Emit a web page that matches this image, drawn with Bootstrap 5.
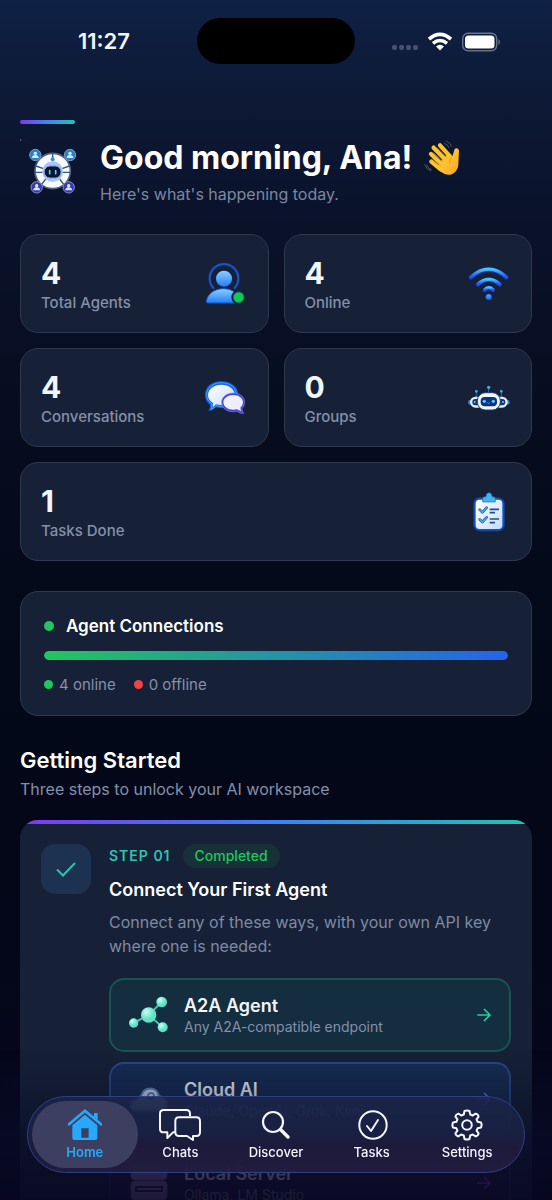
<!DOCTYPE html>
<html lang="en" data-bs-theme="dark">
<head>
<meta charset="utf-8">
<meta name="viewport" content="width=device-width, initial-scale=1">
<title>Home</title>
<link href="https://cdn.jsdelivr.net/npm/bootstrap@5.3.0/dist/css/bootstrap.min.css" rel="stylesheet">
<style>
  :root { --panel: #162137; --edge: #2f394c; --muted: #8490a8; --bright: #f1f5fc; }
  body { font-family: Inter, "Liberation Sans", sans-serif; color: var(--bright); background: #040919; }
  svg { display: block; flex: none; }
  .app-shell { height: 100vh; overflow: hidden; background: linear-gradient(#0f2145 0, #0d1834 110px, #0a122a 230px, #070d20 400px, #040a1a 580px, #030718 850px, #07061e 1200px); }
  .status-bar { height: 83px; padding: 0 51px 0 78px; flex: none; }
  .status-time { font-size: 22px; font-weight: 600; }
  .island { width: 158px; height: 46px; border-radius: 23px; background: #000; top: 18px; }
  .page-body { padding: 37px 20px 0; }
  .accent-line { width: 55px; height: 4px; border-radius: 2px; background: linear-gradient(90deg, #7c3aed, #4484ee, #21c4b0); margin-bottom: 14px; }
  .hello { font-size: 32px; line-height: 40px; font-weight: 700; gap: 12px; }
  .hello-sub { font-size: 16px; line-height: 20px; color: #7b879f; margin-top: 6px; }
  .section-gap { margin-top: 30px; }
  .stat-grid { display: grid; grid-template-columns: 1fr 1fr; gap: 15px; }
  .panel { background: var(--panel); border: 1px solid var(--edge); border-radius: 18px; }
  .stat { padding: 20px; height: 99px; }
  .stat-num { font-size: 30px; line-height: 35px; font-weight: 700; padding-top: 2px; }
  .stat-label { font-size: 15px; line-height: 20px; margin-top: 2px; font-weight: 500; color: var(--muted); }
  .wide { grid-column: span 2; }
  .connections { padding: 22px 23px 20px; }
  .connections h2 { font-size: 17px; line-height: 24px; font-weight: 600; }
  .dot { width: 9px; height: 9px; border-radius: 50%; background: #22c55e; flex: none; }
  .dot-lg { width: 10px; height: 10px; }
  .dot-red { background: #ef4444; }
  .meter { height: 9px; border-radius: 5px; margin: 13px 0 14px; background: #1e293b; }
  .meter .progress-bar { border-radius: 5px; background: linear-gradient(90deg, #22c55e, #2563eb); }
  .legend-row { font-size: 15px; line-height: 21px; color: var(--muted); gap: 18px; }
  .legend-row > span { gap: 6px; }
  .started { font-size: 22px; line-height: 28px; font-weight: 600; }
  .started-sub { font-size: 16px; line-height: 20px; color: var(--muted); margin: 5px 0 21px; }
  .step-card { background: var(--panel); border-radius: 18px 18px 0 0; overflow: hidden; }
  .step-stripe { height: 4px; background: linear-gradient(90deg, #7c3aed, #3b82f6 50%, #21c4b0); }
  .step-inner { padding: 20px 21px; gap: 18px; }
  .check-tile { width: 50px; height: 50px; border-radius: 14px; background: #1d3150; flex: none; }
  .step-no { font-size: 14px; line-height: 24px; font-weight: 600; letter-spacing: 1px; color: #2dc4b2; }
  .step-head { gap: 12px; }
  .done { font-size: 14px; line-height: 24px; font-weight: 500; padding: 0 12px; border-radius: 12px; color: #22c55e; background: #163138; }
  .step-title { font-size: 18px; line-height: 24px; margin-top: 10px; font-weight: 600; color: #fff; }
  .step-text { font-size: 16px; line-height: 24px; color: #7f8aa2; margin: 8px 0 20px; }
  .option { height: 74px; border: 2px solid #175452; background: #142e40; border-radius: 15px; padding: 0 17px; gap: 14px; margin-bottom: 10px; text-decoration: none; }
  .option-blue { border-color: #284a8e; background: #172e54; }
  .option-violet { border-color: #3b2860; background: #201f45; }
  .option-name { font-size: 18px; line-height: 22px; font-weight: 600; color: var(--bright); }
  .option-note { font-size: 14px; line-height: 19px; color: var(--muted); }
  .fade-out { height: 150px; pointer-events: none; background: linear-gradient(rgba(6,12,32,0), rgba(8,12,38,.36) 32%, rgba(9,11,38,.72) 62%, rgba(8,6,32,.86)); }
  .tab-wrap { padding: 0 27px 27px; z-index: 1031; }
  .tab-bar { height: 77px; padding: 4px 9px; border: 1px solid #2f3f82; border-radius: 39px; background: linear-gradient(rgba(27,37,74,.88), rgba(25,34,68,.92) 45%, rgba(31,27,60,.95) 65%, rgba(33,30,64,.96)); }
  .tab { font-size: 13px; line-height: 18px; font-weight: 500; color: #f2f4ff; text-decoration: none; border-radius: 34px; gap: 2px; margin: 0 -5px; flex: 1 1 0; }
  .tab-on { color: #28a8fb; background: #3c3f5f; font-weight: 600; }
</style>
</head>
<body>
<div class="app-shell d-flex flex-column">
  <header class="status-bar d-flex align-items-center justify-content-between position-relative">
    <span class="status-time">11:27</span>
    <div class="island position-absolute start-50 translate-middle-x"></div>
    <svg width="110" height="24" viewBox="0 0 110 24" aria-hidden="true">
      <g fill="#46526d"><rect x="1" y="15" width="5" height="5" rx="2"/><rect x="8" y="15" width="5" height="5" rx="2"/><rect x="15" y="15" width="5" height="5" rx="2"/><rect x="22" y="15" width="5" height="5" rx="2"/></g>
      <g fill="none" stroke="#fff" stroke-width="3.6"><path d="M38 9.200Q49 -.4 60 9.200"/><path d="M42 13.400Q49 7.600 56 13.400"/></g>
      <path d="M45 16.500Q49 13 53 16.500L49 20.500Z" fill="#fff"/>
      <rect x="71.700" y="3.200" width="34" height="17.600" rx="5.500" fill="none" stroke="#68738b" stroke-width="1.400"/>
      <rect x="74" y="5.500" width="29.500" height="13" rx="3.500" fill="#fff"/>
      <path d="M107.500 9q3 3 0 6Z" fill="#68738b"/>
    </svg>
  </header>

  <main class="page-body">
    <div class="accent-line"></div>
    <div class="d-flex align-items-center gap-3">
      <svg width="64" height="64" viewBox="60 114 192 192" aria-hidden="true">
        <defs>
          <linearGradient id="azure" x2="0" y2="1"><stop stop-color="#8ed0ff"/><stop offset="1" stop-color="#1f7df8"/></linearGradient>
          <linearGradient id="sky" x2="0" y2="1"><stop stop-color="#45c4ff"/><stop offset="1" stop-color="#2455f5"/></linearGradient>
          <linearGradient id="frost" x2="1" y2="1"><stop stop-color="#ffffff"/><stop offset="1" stop-color="#c3ddfb"/></linearGradient>
          <radialGradient id="mint" cx=".35" cy=".3"><stop stop-color="#c9fff0"/><stop offset="1" stop-color="#5fe0c8"/></radialGradient>
        </defs>
        <g fill="#7c879b"><circle cx="62" cy="117" r="2"/><circle cx="78" cy="117" r="1"/></g>
        <path d="M106 162L210 259M210 162L110 259" stroke="#59709a" stroke-width="8"/>
        <circle cx="158" cy="210" r="53" fill="#f6f9ff" stroke="#525f7a" stroke-width="5"/>
        <path d="M158 158v22M108 195l22 8M208 195l-22 8M125 250l12-16M191 250l-12-16M106 214h22M188 214h22" stroke="#33538d" stroke-width="4"/>
        <circle cx="158" cy="212" r="31" fill="#a9c4f5"/>
        <circle cx="158" cy="175" r="6" fill="#2c8cf0"/>
        <rect x="133" y="195" width="50" height="36" rx="17" fill="#07152f" stroke="#7c9fdb" stroke-width="3"/>
        <path d="M149 209v9M167 209v9" stroke="#54cfff" stroke-width="5" stroke-linecap="round"/>
        <g stroke="#8298be" stroke-width="3"><circle cx="106" cy="162" r="17" fill="#267fc4"/><circle cx="210" cy="162" r="17" fill="#267fc4"/><circle cx="110" cy="259" r="17" fill="#3c35b5"/><circle cx="206" cy="259" r="17" fill="#3c35b5"/></g>
        <g fill="#d4edff"><circle cx="106" cy="157" r="5"/><path d="M96 171q0-9 10-9t10 9Z"/><circle cx="210" cy="157" r="5"/><path d="M200 171q0-9 10-9t10 9Z"/><circle cx="110" cy="254" r="5"/><path d="M100 268q0-9 10-9t10 9Z"/><circle cx="206" cy="254" r="5"/><path d="M196 268q0-9 10-9t10 9Z"/></g>
      </svg>
      <div>
        <h1 class="hello mb-0 d-flex align-items-center">Good morning, Ana!
          <svg width="36" height="36" viewBox="0 0 108 108" role="img" aria-label="Waving hand">
            <defs><linearGradient id="hand" x2="1" y2="1"><stop stop-color="#ffd84a"/><stop offset="1" stop-color="#f7a51d"/></linearGradient></defs>
            <path d="M44 70L73 40 84 50Q88 42 91 30C93 22 106 24 105 34C104 46 104 58 103 74C101 96 82 110 62 102C55 99 49 93 42 87Z" fill="url(#hand)"/>
            <g stroke="#fdc32f" stroke-width="13" stroke-linecap="round"><path d="M48 16L78 49"/><path d="M29 23L65 60"/><path d="M21 42L56 76"/><path d="M22 65L50 88"/></g>
            <g stroke="#df8f12" stroke-width="2" stroke-linecap="round" fill="none"><path d="M40 24L68 52M29 39L58 65M26 58L50 76"/><path d="M83 51Q75 58 77 70"/></g>
            <g stroke="#5a6070" stroke-width="2.500" stroke-linecap="round" fill="none"><path d="M62 10q10 4 13 13M67 3q12 5 16 16M9 76q3 10 13 13M2 73q4 15 18 20"/></g>
          </svg>
        </h1>
        <p class="hello-sub mb-0">Here's what's happening today.</p>
      </div>
    </div>

    <section class="stat-grid section-gap" aria-label="Overview">
      <div class="panel stat d-flex align-items-center justify-content-between">
        <div><div class="stat-num">4</div><div class="stat-label">Total Agents</div></div>
        <svg width="45" height="45" viewBox="607 105 135 135" aria-hidden="true">
          <path d="M638 186A43 43 0 1 1 702 186" fill="none" stroke="#1b51c6" stroke-width="7" stroke-linecap="round"/>
          <circle cx="670" cy="158" r="28" fill="#10234e"/><circle cx="670" cy="158" r="24" fill="url(#azure)"/>
          <path d="M617 226C620 203 642 188 668 188C690 188 706 198 713 212V231H622Q617 231 617 226Z" fill="url(#azure)" stroke="#1555d8" stroke-width="3"/>
          <circle cx="714" cy="214" r="22" fill="#162137"/><circle cx="714" cy="214" r="16" fill="#12c65b" stroke="#087d4a" stroke-width="3"/>
        </svg>
      </div>
      <div class="panel stat d-flex align-items-center justify-content-between">
        <div><div class="stat-num">4</div><div class="stat-label">Online</div></div>
        <svg width="45" height="45" viewBox="579 105 135 135" aria-hidden="true">
          <g fill="none" stroke-linecap="round"><g stroke="#173ec0" stroke-width="13"><path d="M594 154Q647 107 700 154"/><path d="M615 175Q647 147 680 175"/><path d="M635 192Q647 180 660 192"/></g>
          <g stroke="url(#sky)" stroke-width="9"><path d="M594 153Q647 106 700 153"/><path d="M615 174Q647 146 680 174"/><path d="M635 191Q647 179 660 191"/></g></g>
          <circle cx="647" cy="213" r="9" fill="url(#sky)" stroke="#173ec0" stroke-width="2"/>
        </svg>
      </div>
      <div class="panel stat d-flex align-items-center justify-content-between">
        <div><div class="stat-num">4</div><div class="stat-label">Conversations</div></div>
        <svg width="45" height="45" viewBox="607 448 135 135" aria-hidden="true">
          <path d="M662 467C692 467 713 484 713 508S692 547 662 547Q653 547 646 545Q638 554 623 556Q630 548 628 537C618 530 613 519 613 508C613 484 633 467 662 467Z" fill="#1a63e8"/>
          <path d="M662 471C688 471 707 487 707 508S688 542 662 542Q653 542 646 540Q640 548 631 551Q635 544 633 534C623 528 618 518 618 508C618 487 637 471 662 471Z" fill="none" stroke="#4cc3ff" stroke-width="2"/>
          <path d="M662 477C685 477 702 490 702 508S685 538 662 538Q653 538 646 536L636 545L637 532C627 526 622 517 622 508C622 490 640 477 662 477Z" fill="url(#frost)"/>
          <path d="M698 502C718 502 732 514 732 530Q732 542 724 549Q724 557 729 563Q717 564 709 557C683 562 663 550 663 530C663 514 678 502 698 502Z" fill="#4545dc" stroke="#8b78ff" stroke-width="2"/>
          <path d="M698 508C715 508 727 518 727 530Q727 540 719 546L721 557L709 551C688 556 668 546 668 530C668 518 681 508 698 508Z" fill="#eeeeff"/>
        </svg>
      </div>
      <div class="panel stat d-flex align-items-center justify-content-between">
        <div><div class="stat-num">0</div><div class="stat-label">Groups</div></div>
        <svg width="45" height="45" viewBox="579 448 135 135" aria-hidden="true">
          <path d="M647 486v18M610 498v16M685 498v16" stroke="#2c6ab4" stroke-width="3"/>
          <circle cx="647" cy="485" r="5" fill="#37b4ef"/><circle cx="610" cy="497" r="4" fill="#37b4ef"/><circle cx="685" cy="497" r="4" fill="#37b4ef"/>
          <ellipse cx="590" cy="530" rx="5" ry="7" fill="#3e7ac4"/><ellipse cx="705" cy="530" rx="5" ry="7" fill="#3e7ac4"/>
          <rect x="591" y="513" width="40" height="33" rx="16" fill="#e3eeff"/><rect x="664" y="513" width="40" height="33" rx="16" fill="#e3eeff"/>
          <rect x="598" y="520" width="30" height="19" rx="9" fill="#143572"/><rect x="667" y="520" width="30" height="19" rx="9" fill="#143572"/>
          <circle cx="605" cy="529" r="3" fill="#4cd0ff"/><circle cx="690" cy="529" r="3" fill="#4cd0ff"/>
          <rect x="613" y="501" width="69" height="52" rx="24" fill="#f0f5ff" stroke="#1c3e7e" stroke-width="3"/>
          <rect x="623" y="514" width="49" height="28" rx="12" fill="#0d3280"/>
          <circle cx="634" cy="527" r="5" fill="#54c9ff"/><circle cx="661" cy="527" r="5" fill="#54c9ff"/><path d="M643 531q4 4 8 0" fill="none" stroke="#54c9ff" stroke-width="2"/>
        </svg>
      </div>
      <div class="panel stat wide d-flex align-items-center justify-content-between">
        <div><div class="stat-num">1</div><div class="stat-label">Tasks Done</div></div>
        <svg width="45" height="45" viewBox="195 100 135 135" aria-hidden="true">
          <rect x="218" y="126" width="92" height="100" rx="18" fill="#1556be" stroke="#0d3d94" stroke-width="3"/>
          <rect x="224" y="132" width="80" height="88" rx="12" fill="url(#frost)"/>
          <path d="M245 139V130Q245 123 252 123H255Q255 111 264 111T273 123H276Q283 123 283 130V139Z" fill="#45b2ee" stroke="#176bc4" stroke-width="2"/>
          <g fill="none" stroke-linecap="round" stroke-linejoin="round"><path d="M236 162l8 8 13-14M236 191l8 8 13-14" stroke="#1b61ab" stroke-width="8"/><path d="M236 162l8 8 13-14M236 191l8 8 13-14" stroke="#54a9e0" stroke-width="4"/></g>
          <path d="M266 161h28M266 171h16M266 190h28M266 201h16" stroke="#234d8f" stroke-width="5"/>
        </svg>
      </div>
    </section>

    <section class="panel connections section-gap">
      <div class="d-flex align-items-center gap-2">
        <span class="dot dot-lg"></span><h2 class="mb-0 ms-1">Agent Connections</h2>
      </div>
      <div class="progress meter" role="progressbar" aria-label="Agents online" aria-valuenow="100" aria-valuemin="0" aria-valuemax="100"><div class="progress-bar w-100 h-100"></div></div>
      <div class="legend-row d-flex">
        <span class="d-flex align-items-center"><span class="dot"></span>4 online</span>
        <span class="d-flex align-items-center"><span class="dot dot-red"></span>0 offline</span>
      </div>
    </section>

    <section class="section-gap">
      <h2 class="started mb-0">Getting Started</h2>
      <p class="started-sub">Three steps to unlock your AI workspace</p>
      <div class="step-card">
        <div class="step-stripe"></div>
        <div class="step-inner d-flex align-items-start">
          <div class="check-tile d-flex align-items-center justify-content-center">
            <svg width="24" height="24" viewBox="0 0 24 24" fill="none" stroke="#2dc4b2" stroke-width="2" aria-hidden="true"><path d="M3 12.500L9 18.500 21 6"/></svg>
          </div>
          <div class="flex-grow-1">
            <div class="step-head d-flex align-items-center"><span class="step-no">STEP 01</span><span class="done">Completed</span></div>
            <h3 class="step-title mb-0">Connect Your First Agent</h3>
            <p class="step-text">Connect any of these ways, with your own API key where one is needed:</p>
            <a href="#a2a" class="option d-flex align-items-center">
              <svg width="42" height="42" viewBox="0 0 126 126" aria-hidden="true">
                <path d="M17 87L62 63 101 24M62 63L104 100" stroke="#45bfae" stroke-width="6" fill="none"/>
                <g fill="url(#mint)"><circle cx="62" cy="63" r="23"/><circle cx="101" cy="24" r="16"/><circle cx="17" cy="87" r="14"/><circle cx="104" cy="100" r="15"/></g>
              </svg>
              <span class="flex-grow-1"><span class="option-name d-block">A2A Agent</span><span class="option-note d-block">Any A2A-compatible endpoint</span></span>
              <svg width="16" height="16" viewBox="0 0 16 16" fill="none" stroke="#20cfa0" stroke-width="1.700" stroke-linecap="round" stroke-linejoin="round" aria-hidden="true"><path d="M2 8h12M8.500 2.500L14 8 8.500 13.500"/></svg>
            </a>
            <a href="#cloud" class="option option-blue d-flex align-items-center">
              <svg width="42" height="42" viewBox="0 0 42 42" aria-hidden="true"><path d="M8 33C1 32 1 23 8 22C10 19 11 19 13 18C16 8 29 8 31 18C41 19 41 33 33 33Z" fill="#c9d9f0" stroke="#5d89bd" stroke-width="2"/><circle cx="23" cy="18" r="3" fill="none" stroke="#4a74b0" stroke-width="1.500"/></svg>
              <span class="flex-grow-1"><span class="option-name d-block">Cloud AI</span><span class="option-note d-block">Claude, OpenAI, Grok, Kimi</span></span>
              <svg width="16" height="16" viewBox="0 0 16 16" fill="none" stroke="#4a80f4" stroke-width="1.700" stroke-linecap="round" stroke-linejoin="round" aria-hidden="true"><path d="M2 8h12M8.500 2.500L14 8 8.500 13.500"/></svg>
            </a>
            <a href="#local" class="option option-violet d-flex align-items-center">
              <svg width="42" height="42" viewBox="0 0 42 42" aria-hidden="true"><g fill="#a184c8" stroke="#7b62a8"><rect x="3" y="2" width="36" height="16" rx="4"/><rect x="3" y="19" width="36" height="19" rx="4"/></g><rect x="8" y="25" width="26" height="4" fill="none" stroke="#30264e" stroke-width="2"/></svg>
              <span class="flex-grow-1"><span class="option-name d-block">Local Server</span><span class="option-note d-block">Ollama, LM Studio</span></span>
              <svg width="16" height="16" viewBox="0 0 16 16" fill="none" stroke="#9a43e0" stroke-width="1.700" stroke-linecap="round" stroke-linejoin="round" aria-hidden="true"><path d="M2 8h12M8.500 2.500L14 8 8.500 13.500"/></svg>
            </a>
          </div>
        </div>
      </div>
    </section>
  </main>
</div>

<div class="fade-out fixed-bottom"></div>
<div class="tab-wrap fixed-bottom">
  <nav class="tab-bar d-flex" aria-label="Main">
    <a href="#home" class="tab tab-on d-flex flex-column align-items-center justify-content-center" aria-current="page">
      <svg width="34" height="32" viewBox="0 0 102 96" aria-hidden="true"><path d="M3 46L51 5 99 46" fill="none" stroke="#28a8fb" stroke-width="8" stroke-linecap="round" stroke-linejoin="round"/><path d="M78 12h11v22l-11-9Z" fill="#28a8fb"/><path fill-rule="evenodd" d="M13 49L51 17 88 49V87Q88 93 82 93H19Q13 93 13 87ZM40 58V86H62V58Z" fill="#28a8fb"/></svg>
      Home
    </a>
    <a href="#chats" class="tab d-flex flex-column align-items-center justify-content-center">
      <svg width="42" height="32" viewBox="0 0 126 96" fill="none" stroke="#f4f7ff" stroke-width="6" stroke-linejoin="round" aria-hidden="true"><path d="M93 22V14Q93 3 82 3H14Q3 3 3 14V59Q3 70 14 70H25V87L42 70H49"/><path d="M60 25H112Q123 25 123 36V70Q123 81 112 81H102V93L84 81H60Q49 81 49 70V36Q49 25 60 25Z"/></svg>
      Chats
    </a>
    <a href="#discover" class="tab d-flex flex-column align-items-center justify-content-center">
      <svg width="32" height="32" viewBox="0 0 32 32" fill="none" stroke="#f4f7ff" aria-hidden="true"><circle cx="13" cy="13" r="10" stroke-width="2.200"/><path d="M20.500 20.500L28 28" stroke-width="3.400" stroke-linecap="round"/></svg>
      Discover
    </a>
    <a href="#tasks" class="tab d-flex flex-column align-items-center justify-content-center">
      <svg width="32" height="32" viewBox="0 0 32 32" fill="none" stroke="#f4f7ff" stroke-width="2" aria-hidden="true"><circle cx="17" cy="16" r="13.700"/><path d="M11 17l4 5 7-11" stroke-linecap="round" stroke-linejoin="round"/></svg>
      Tasks
    </a>
    <a href="#settings" class="tab d-flex flex-column align-items-center justify-content-center">
      <svg width="32" height="32" viewBox="0 0 32 32" fill="none" stroke="#f4f7ff" stroke-width="2" stroke-linejoin="round" aria-hidden="true"><path d="M13.500 2Q16 .8 18.500 2L19.200 5.500 21.800 6.500 24.600 4.600Q27.200 5.200 27.600 7.600L25.600 10.300 26.600 12.800 30 13.500Q31.200 16 30 18.500L26.600 19.200 25.600 21.700 27.600 24.400Q27.200 26.900 24.600 27.400L21.800 25.500 19.200 26.500 18.500 30Q16 31.200 13.500 30L12.800 26.500 10.200 25.500 7.400 27.400Q4.900 26.900 4.400 24.400L6.400 21.700 5.400 19.200 2 18.500Q.8 16 2 13.500L5.400 12.800 6.400 10.300 4.400 7.600Q4.900 5.200 7.400 4.600L10.200 6.500 12.800 5.500Z"/><circle cx="16" cy="16" r="4.800"/></svg>
      Settings
    </a>
  </nav>
</div>
<script src="https://cdn.jsdelivr.net/npm/bootstrap@5.3.0/dist/js/bootstrap.bundle.min.js"></script>
</body>
</html>
